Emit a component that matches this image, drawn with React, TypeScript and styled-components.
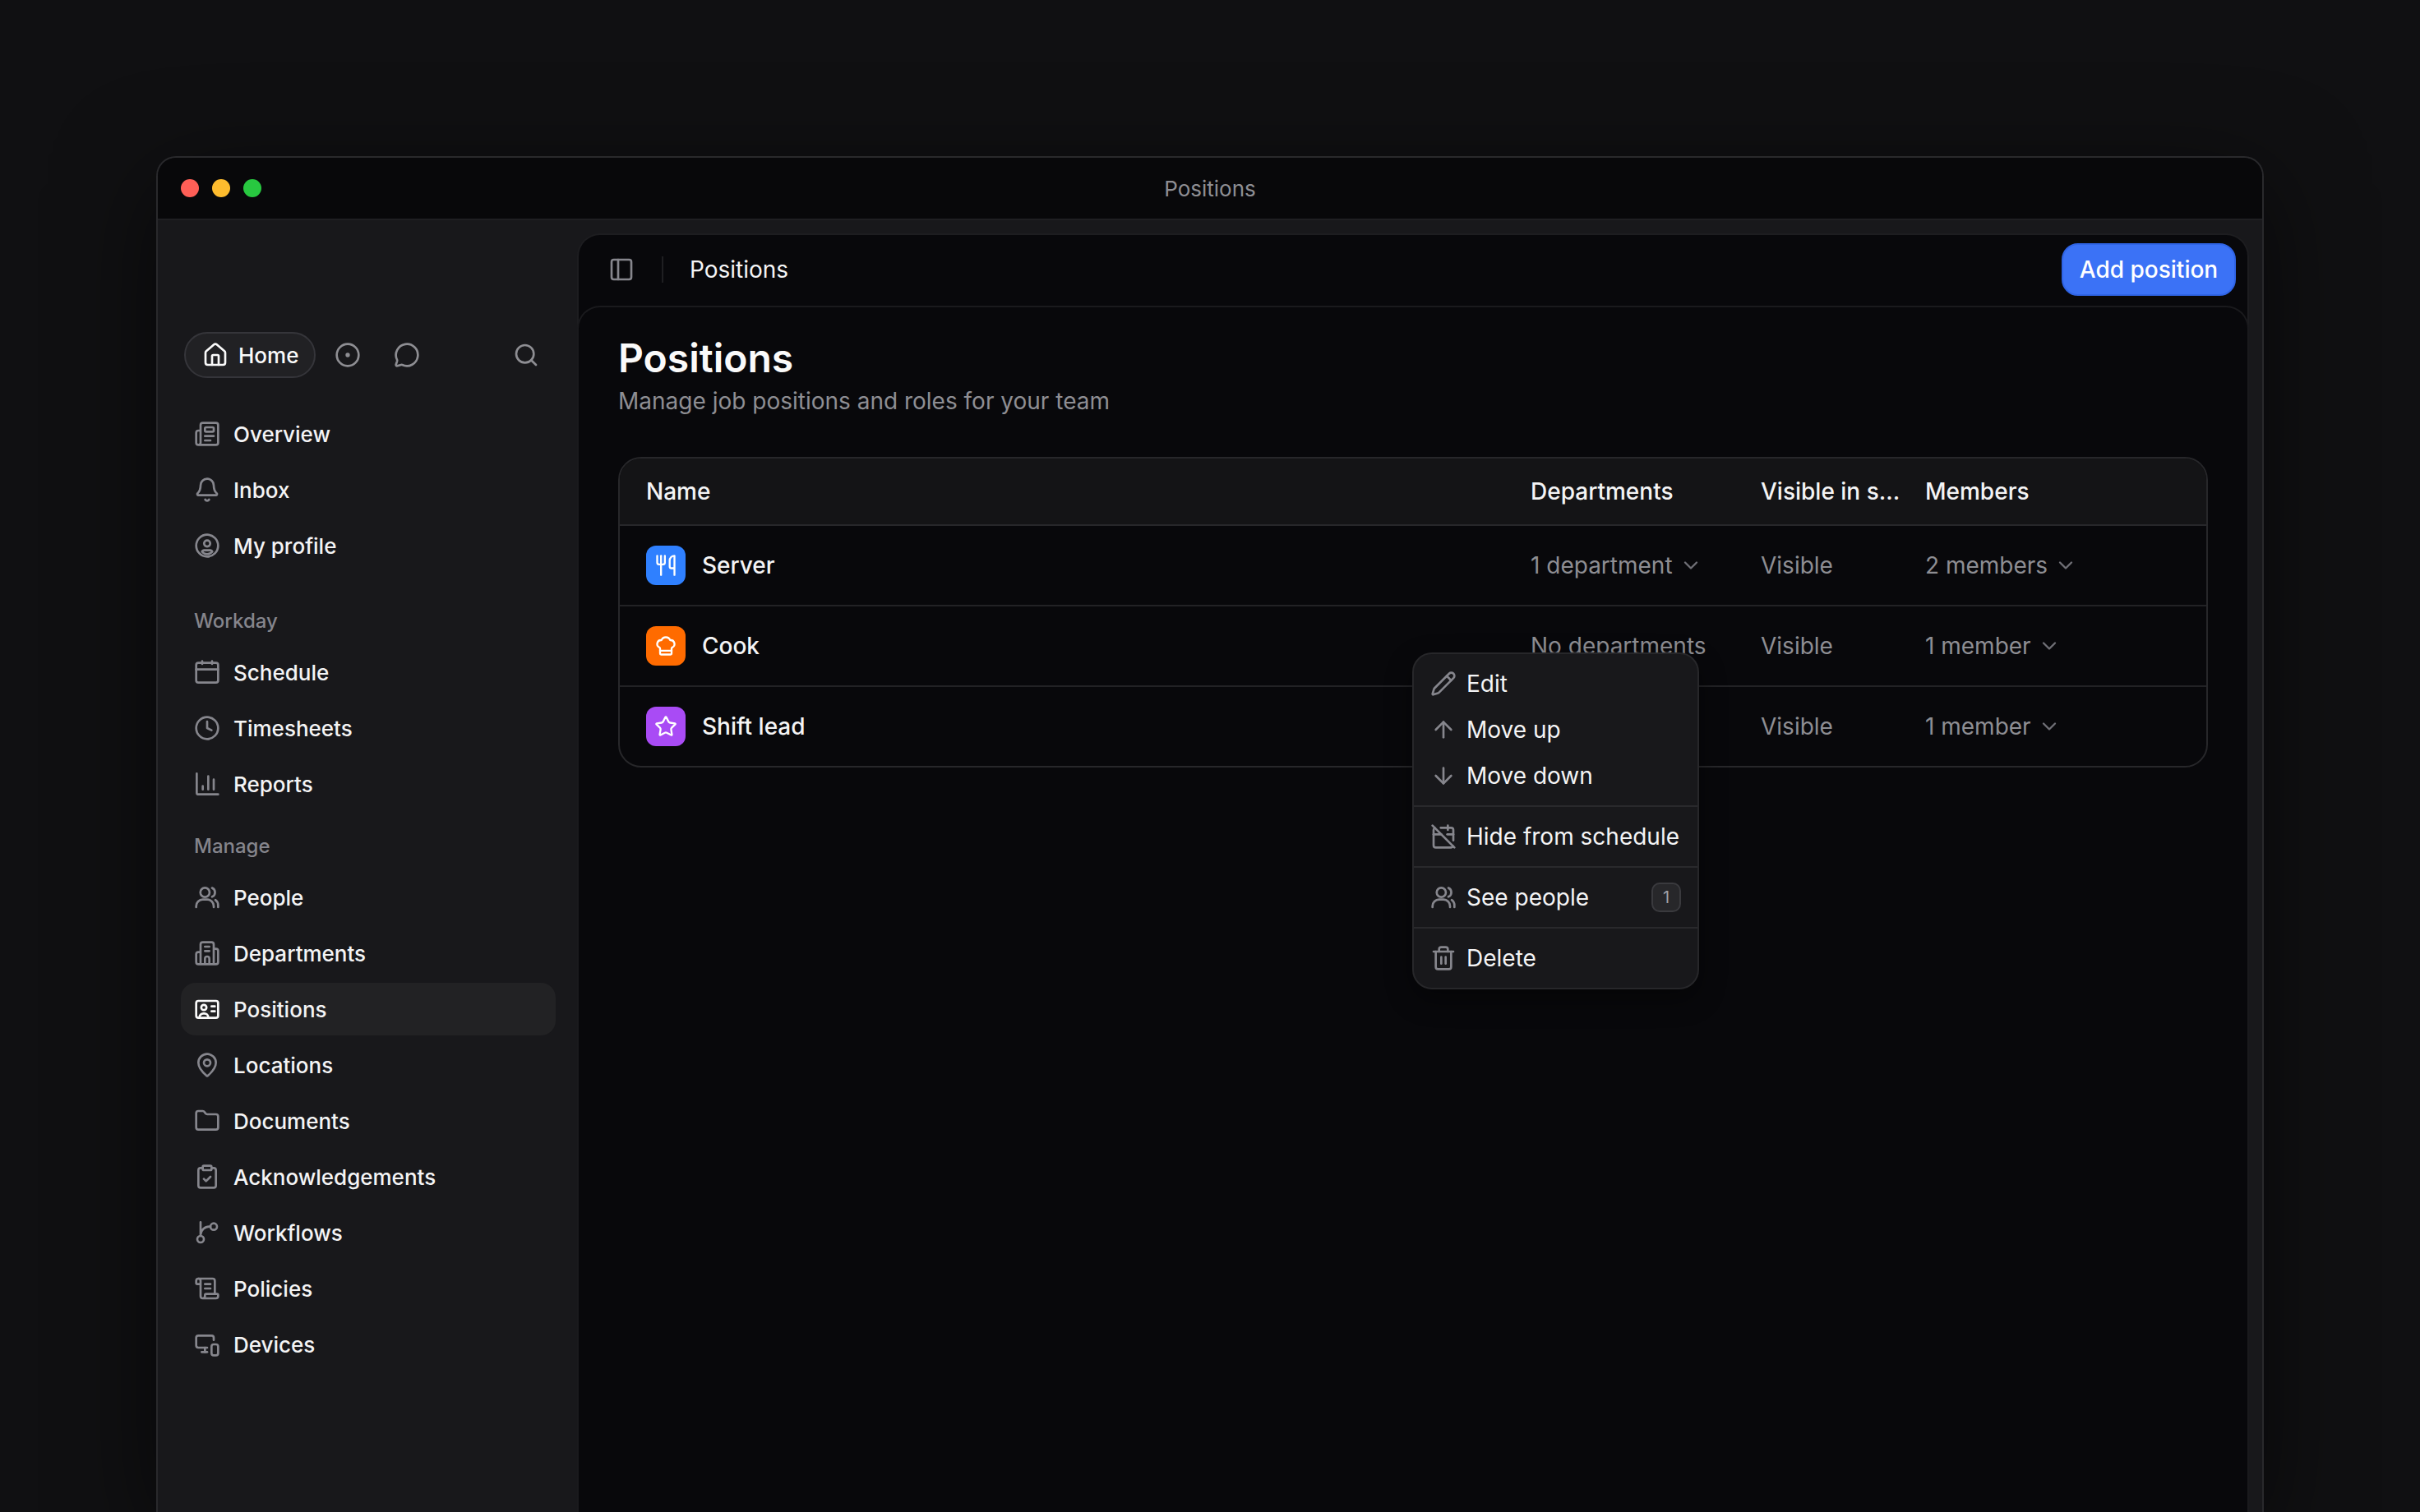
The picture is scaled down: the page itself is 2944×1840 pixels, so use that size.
import React from 'react';
import styled, { createGlobalStyle } from 'styled-components';
import {
  ArrowDown,
  ArrowUp,
  Bell,
  CalendarOff,
  ChefHat,
  ChevronDown,
  CircleDot,
  ClipboardCheck,
  Clock,
  Folder,
  House,
  MapPin,
  MessageCircle,
  MonitorSmartphone,
  Newspaper,
  PanelLeft,
  Pencil,
  ScrollText,
  Search,
  Star,
  Trash2,
  Utensils,
} from 'lucide-react';

const GlobalStyle = createGlobalStyle`
  html, body {
    margin: 0;
    height: 100%;
    background: #101012;
    overflow: hidden;
  }
  body {
    font-family: Inter, "Liberation Sans", sans-serif;
    font-size: 28px;
    font-optical-sizing: none;
    color: #f4f4f5;
  }
  * {
    box-sizing: border-box;
  }
`;

const Page = styled.div`
  height: 100vh;
  padding: 190px 190px 0;
  display: flex;
`;

const Window = styled.div`
  flex: 1;
  display: flex;
  flex-direction: column;
  min-width: 0;
  border: 2px solid #29292c;
  border-bottom: 0;
  border-radius: 24px 24px 0 0;
  background: #18181b;
  box-shadow: 0 30px 120px rgba(0, 0, 0, 0.55);
  overflow: hidden;
`;

const TitleBar = styled.div`
  height: 76px;
  flex: none;
  display: grid;
  grid-template-columns: 1fr auto 1fr;
  align-items: center;
  padding: 0 28px;
  background: #08080a;
  border-bottom: 2px solid #1f1f22;
`;

const Dots = styled.div`
  display: flex;
  gap: 16px;
`;

const Dot = styled.span<{ $color: string }>`
  width: 22px;
  height: 22px;
  border-radius: 50%;
  background: ${(p) => p.$color};
`;

const WindowTitle = styled.div`
  font-size: 26px;
  color: #8e8e93;
`;

const Body = styled.div`
  flex: 1;
  display: flex;
  min-height: 0;
`;

const Sidebar = styled.nav`
  width: 510px;
  flex: none;
  padding: 136px 26px 0 28px;
  display: flex;
  flex-direction: column;
`;

const HomeRow = styled.div`
  height: 56px;
  display: flex;
  align-items: center;
  margin: 0 0 36px 4px;
  padding-right: 20px;
  color: #8e8e93;
`;

const HomePill = styled.div`
  width: 160px;
  height: 56px;
  display: flex;
  align-items: center;
  gap: 12px;
  padding-left: 20px;
  border: 2px solid #35353a;
  border-radius: 28px;
  background: #212124;
  color: #fafafa;
  font-size: 26px;
  font-weight: 500;
  margin-right: 23px;
`;

const RoundAction = styled.span`
  display: flex;
  margin-right: 40px;
`;

const SearchAction = styled.span`
  display: flex;
  margin-left: auto;
`;

const NavGroup = styled.div<{ $gapAfter: number }>`
  display: flex;
  flex-direction: column;
  gap: 4px;
  margin-bottom: ${(p) => p.$gapAfter}px;
`;

const NavLabel = styled.div`
  height: 36px;
  line-height: 36px;
  padding-left: 16px;
  margin-bottom: 8px;
  font-size: 24px;
  font-weight: 500;
  color: #85858c;
`;

const NavItem = styled.a<{ $active?: boolean }>`
  height: 64px;
  display: flex;
  align-items: center;
  gap: 16px;
  padding: 0 16px;
  border-radius: 18px;
  font-size: 26px;
  color: #f4f4f5;
  font-weight: 500;
  background: ${(p) => (p.$active ? '#222224' : 'transparent')};

  svg {
    flex: none;
    color: ${(p) => (p.$active ? '#fafafa' : '#86868d')};
  }
`;

const Main = styled.main`
  flex: 1;
  min-width: 0;
  margin: 16px 16px 0 0;
  display: flex;
  flex-direction: column;
  border: 2px solid #1d1d20;
  border-bottom: 0;
  border-radius: 28px 28px 0 0;
  background: #08080b;
`;

const MainHeader = styled.header`
  height: 86px;
  flex: none;
  display: flex;
  align-items: center;
  padding: 0 14px 2px 36px;
  color: #86868d;
`;

const HeaderDivider = styled.span`
  width: 2px;
  height: 32px;
  margin: 0 32px 0 33px;
  background: #1f1f22;
`;

const HeaderTitle = styled.span`
  color: #f4f4f5;
`;

const AddButton = styled.button`
  margin-left: auto;
  width: 212px;
  height: 64px;
  border: 2px solid #2f64e6;
  border-radius: 20px;
  background: #3b72f6;
  color: #fff;
  font: 500 28px Inter, sans-serif;
`;

const Content = styled.section`
  flex: 1;
  margin: 0 -2px;
  padding: 34px 48px 0;
  border: 2px solid #1a1a1d;
  border-bottom: 0;
  border-radius: 28px 28px 0 0;
  background: #08080b;
`;

const PageTitle = styled.h1`
  margin: 0;
  height: 56px;
  line-height: 56px;
  font-size: 48px;
  font-weight: 600;
  font-variation-settings: 'opsz' 24;
  color: #fafafa;
`;

const PageSubtitle = styled.p`
  margin: 4px 0 48px;
  height: 40px;
  line-height: 40px;
  color: #8e8e93;
`;

const TableWrap = styled.div`
  position: relative;
`;

const Table = styled.div`
  border: 2px solid #27272a;
  border-radius: 28px;
  overflow: hidden;
`;

const columns = '1076px 280px 200px 1fr';

const HeadRow = styled.div`
  height: 82px;
  display: grid;
  grid-template-columns: ${columns};
  align-items: center;
  background: #141416;
  border-bottom: 2px solid #27272a;
  font-weight: 500;
  color: #f4f4f5;
`;

const Row = styled.div`
  height: 98px;
  display: grid;
  grid-template-columns: ${columns};
  align-items: center;
  border-bottom: 2px solid #222225;

  &:last-child {
    height: 96px;
    border-bottom: 0;
  }
`;

const Cell = styled.div`
  padding-left: 32px;
  display: flex;
  align-items: center;
  min-width: 0;
  white-space: nowrap;
`;

const NameCell = styled(Cell)`
  gap: 20px;
  color: #f4f4f5;
  font-weight: 500;
`;

const MutedCell = styled(Cell)`
  gap: 8px;
  color: #8e8e93;

  svg {
    color: #6f6f76;
  }
`;

const Tile = styled.span<{ $color: string }>`
  width: 48px;
  height: 48px;
  border-radius: 12px;
  display: flex;
  align-items: center;
  justify-content: center;
  background: ${(p) => p.$color};
  color: #fff;
`;

const Menu = styled.div`
  position: absolute;
  left: 966px;
  top: 238px;
  width: 349px;
  padding: 8px 0;
  border: 2px solid #27272a;
  border-radius: 24px;
  background: #18181b;
  box-shadow: 0 12px 32px rgba(0, 0, 0, 0.4);
`;

const MenuItem = styled.div`
  height: 56px;
  display: flex;
  align-items: center;
  gap: 12px;
  padding: 0 20px;
  color: #f4f4f5;
  white-space: nowrap;

  svg {
    flex: none;
    color: #86868d;
  }
`;

const MenuSeparator = styled.div`
  height: 2px;
  margin: 8px 0;
  background: #29292c;
`;

const Badge = styled.span`
  margin-left: auto;
  width: 36px;
  height: 36px;
  display: flex;
  align-items: center;
  justify-content: center;
  border: 2px solid #3a3a3e;
  border-radius: 10px;
  background: #27272a;
  color: #a1a1a6;
  font-size: 20px;
`;

const Glyph = styled.svg.attrs({
  width: 32,
  height: 32,
  viewBox: '0 0 24 24',
  fill: 'none',
  stroke: 'currentColor',
  strokeWidth: 2,
  strokeLinecap: 'round',
  strokeLinejoin: 'round',
})``;

const ProfileIcon = () => (
  <Glyph>
    <circle cx="12" cy="12" r="10" />
    <circle cx="12" cy="10" r="2.8" />
    <path d="M9 16.2h6a2 2 0 0 1 1.7 1.3c-1.2 1.3-2.8 2.2-4.7 2.2s-3.5-.9-4.7-2.2A2 2 0 0 1 9 16.2Z" />
  </Glyph>
);

const CalendarIcon = () => (
  <Glyph>
    <rect x="2" y="3.5" width="20" height="18" rx="2" />
    <path d="M2 9.5h20M7.5 2v2.5M16.5 2v2.5" />
  </Glyph>
);

const ReportsIcon = () => (
  <Glyph>
    <path d="M2.5 2.5V20a1.5 1.5 0 0 0 1.5 1.5h18M8 17v-3M13 17V5M18 17V8" />
  </Glyph>
);

const PeopleIcon = () => (
  <Glyph>
    <circle cx="10" cy="7.5" r="4.2" />
    <path d="M16.5 3.4a4.4 4.4 0 0 1 0 8.1M2 21v-1a6 6 0 0 1 6-6h4a6 6 0 0 1 6 6v1M19.5 14.4A6 6 0 0 1 22 19.5V21" />
  </Glyph>
);

const DepartmentsIcon = () => (
  <Glyph>
    <path d="M6 22V4a2 2 0 0 1 2-2h8a2 2 0 0 1 2 2v18ZM6 11H4a2 2 0 0 0-2 2v7a2 2 0 0 0 2 2h2M18 8h2a2 2 0 0 1 2 2v10a2 2 0 0 1-2 2h-2M10 6h4M10 10h4M10 22v-5a2 2 0 0 1 4 0v5" />
  </Glyph>
);

const PositionsIcon = () => (
  <Glyph>
    <rect x="2" y="4.5" width="20" height="15.5" rx="2" />
    <circle cx="9" cy="10.5" r="2.4" />
    <path d="M5 20v-.5a3.5 3.5 0 0 1 3.5-3.5h1a3.5 3.5 0 0 1 3.5 3.5v.5M16 9.5h3M16 14h3" />
  </Glyph>
);

const WorkflowIcon = () => (
  <Glyph>
    <path d="M6 2.5V15M15 6.5h-1a8 8 0 0 0-8 7.5" />
    <circle cx="18" cy="6.5" r="3" />
    <circle cx="6" cy="18" r="3" />
  </Glyph>
);

const nav = [
  {
    gapAfter: 42,
    items: [
      { label: 'Overview', icon: <Newspaper size={32} /> },
      { label: 'Inbox', icon: <Bell size={32} /> },
      { label: 'My profile', icon: <ProfileIcon /> },
    ],
  },
  {
    title: 'Workday',
    gapAfter: 26,
    items: [
      { label: 'Schedule', icon: <CalendarIcon /> },
      { label: 'Timesheets', icon: <Clock size={32} /> },
      { label: 'Reports', icon: <ReportsIcon /> },
    ],
  },
  {
    title: 'Manage',
    gapAfter: 0,
    items: [
      { label: 'People', icon: <PeopleIcon /> },
      { label: 'Departments', icon: <DepartmentsIcon /> },
      { label: 'Positions', icon: <PositionsIcon />, active: true },
      { label: 'Locations', icon: <MapPin size={32} /> },
      { label: 'Documents', icon: <Folder size={32} /> },
      { label: 'Acknowledgements', icon: <ClipboardCheck size={32} /> },
      { label: 'Workflows', icon: <WorkflowIcon /> },
      { label: 'Policies', icon: <ScrollText size={32} /> },
      { label: 'Devices', icon: <MonitorSmartphone size={32} /> },
    ],
  },
];

const positions = [
  { name: 'Server', color: '#2f80ff', icon: <Utensils size={28} />, departments: '1 department', chevron: true, members: '2 members' },
  { name: 'Cook', color: '#ff6b00', icon: <ChefHat size={28} />, departments: 'No departments', chevron: false, members: '1 member' },
  { name: 'Shift lead', color: '#a94bf5', icon: <Star size={28} />, departments: '', chevron: false, members: '1 member' },
];

const App: React.FunctionComponent = () => (
  <Page>
    <GlobalStyle />
    <Window>
      <TitleBar>
        <Dots>
          <Dot $color="#ff5f57" />
          <Dot $color="#febc2e" />
          <Dot $color="#28c840" />
        </Dots>
        <WindowTitle>Positions</WindowTitle>
      </TitleBar>
      <Body>
        <Sidebar>
          <HomeRow>
            <HomePill>
              <House size={32} />
              Home
            </HomePill>
            <RoundAction>
              <CircleDot size={32} />
            </RoundAction>
            <RoundAction>
              <MessageCircle size={32} />
            </RoundAction>
            <SearchAction>
              <Search size={32} />
            </SearchAction>
          </HomeRow>
          {nav.map((group, i) => (
            <NavGroup key={i} $gapAfter={group.gapAfter}>
              {group.title && <NavLabel>{group.title}</NavLabel>}
              {group.items.map((item) => (
                <NavItem key={item.label} $active={'active' in item && item.active}>
                  {item.icon}
                  {item.label}
                </NavItem>
              ))}
            </NavGroup>
          ))}
        </Sidebar>
        <Main>
          <MainHeader>
            <PanelLeft size={32} />
            <HeaderDivider />
            <HeaderTitle>Positions</HeaderTitle>
            <AddButton>Add position</AddButton>
          </MainHeader>
          <Content>
            <PageTitle>Positions</PageTitle>
            <PageSubtitle>Manage job positions and roles for your team</PageSubtitle>
            <TableWrap>
              <Table>
                <HeadRow>
                  <Cell>Name</Cell>
                  <Cell>Departments</Cell>
                  <Cell>Visible in s...</Cell>
                  <Cell>Members</Cell>
                </HeadRow>
                {positions.map((p) => (
                  <Row key={p.name}>
                    <NameCell>
                      <Tile $color={p.color}>{p.icon}</Tile>
                      {p.name}
                    </NameCell>
                    <MutedCell>
                      {p.departments}
                      {p.chevron && <ChevronDown size={28} />}
                    </MutedCell>
                    <MutedCell>Visible</MutedCell>
                    <MutedCell>
                      {p.members}
                      <ChevronDown size={28} />
                    </MutedCell>
                  </Row>
                ))}
              </Table>
              <Menu>
                <MenuItem>
                  <Pencil size={32} />
                  Edit
                </MenuItem>
                <MenuItem>
                  <ArrowUp size={32} />
                  Move up
                </MenuItem>
                <MenuItem>
                  <ArrowDown size={32} />
                  Move down
                </MenuItem>
                <MenuSeparator />
                <MenuItem>
                  <CalendarOff size={32} />
                  Hide from schedule
                </MenuItem>
                <MenuSeparator />
                <MenuItem>
                  <PeopleIcon />
                  See people
                  <Badge>1</Badge>
                </MenuItem>
                <MenuSeparator />
                <MenuItem>
                  <Trash2 size={32} />
                  Delete
                </MenuItem>
              </Menu>
            </TableWrap>
          </Content>
        </Main>
      </Body>
    </Window>
  </Page>
);

export default App;
